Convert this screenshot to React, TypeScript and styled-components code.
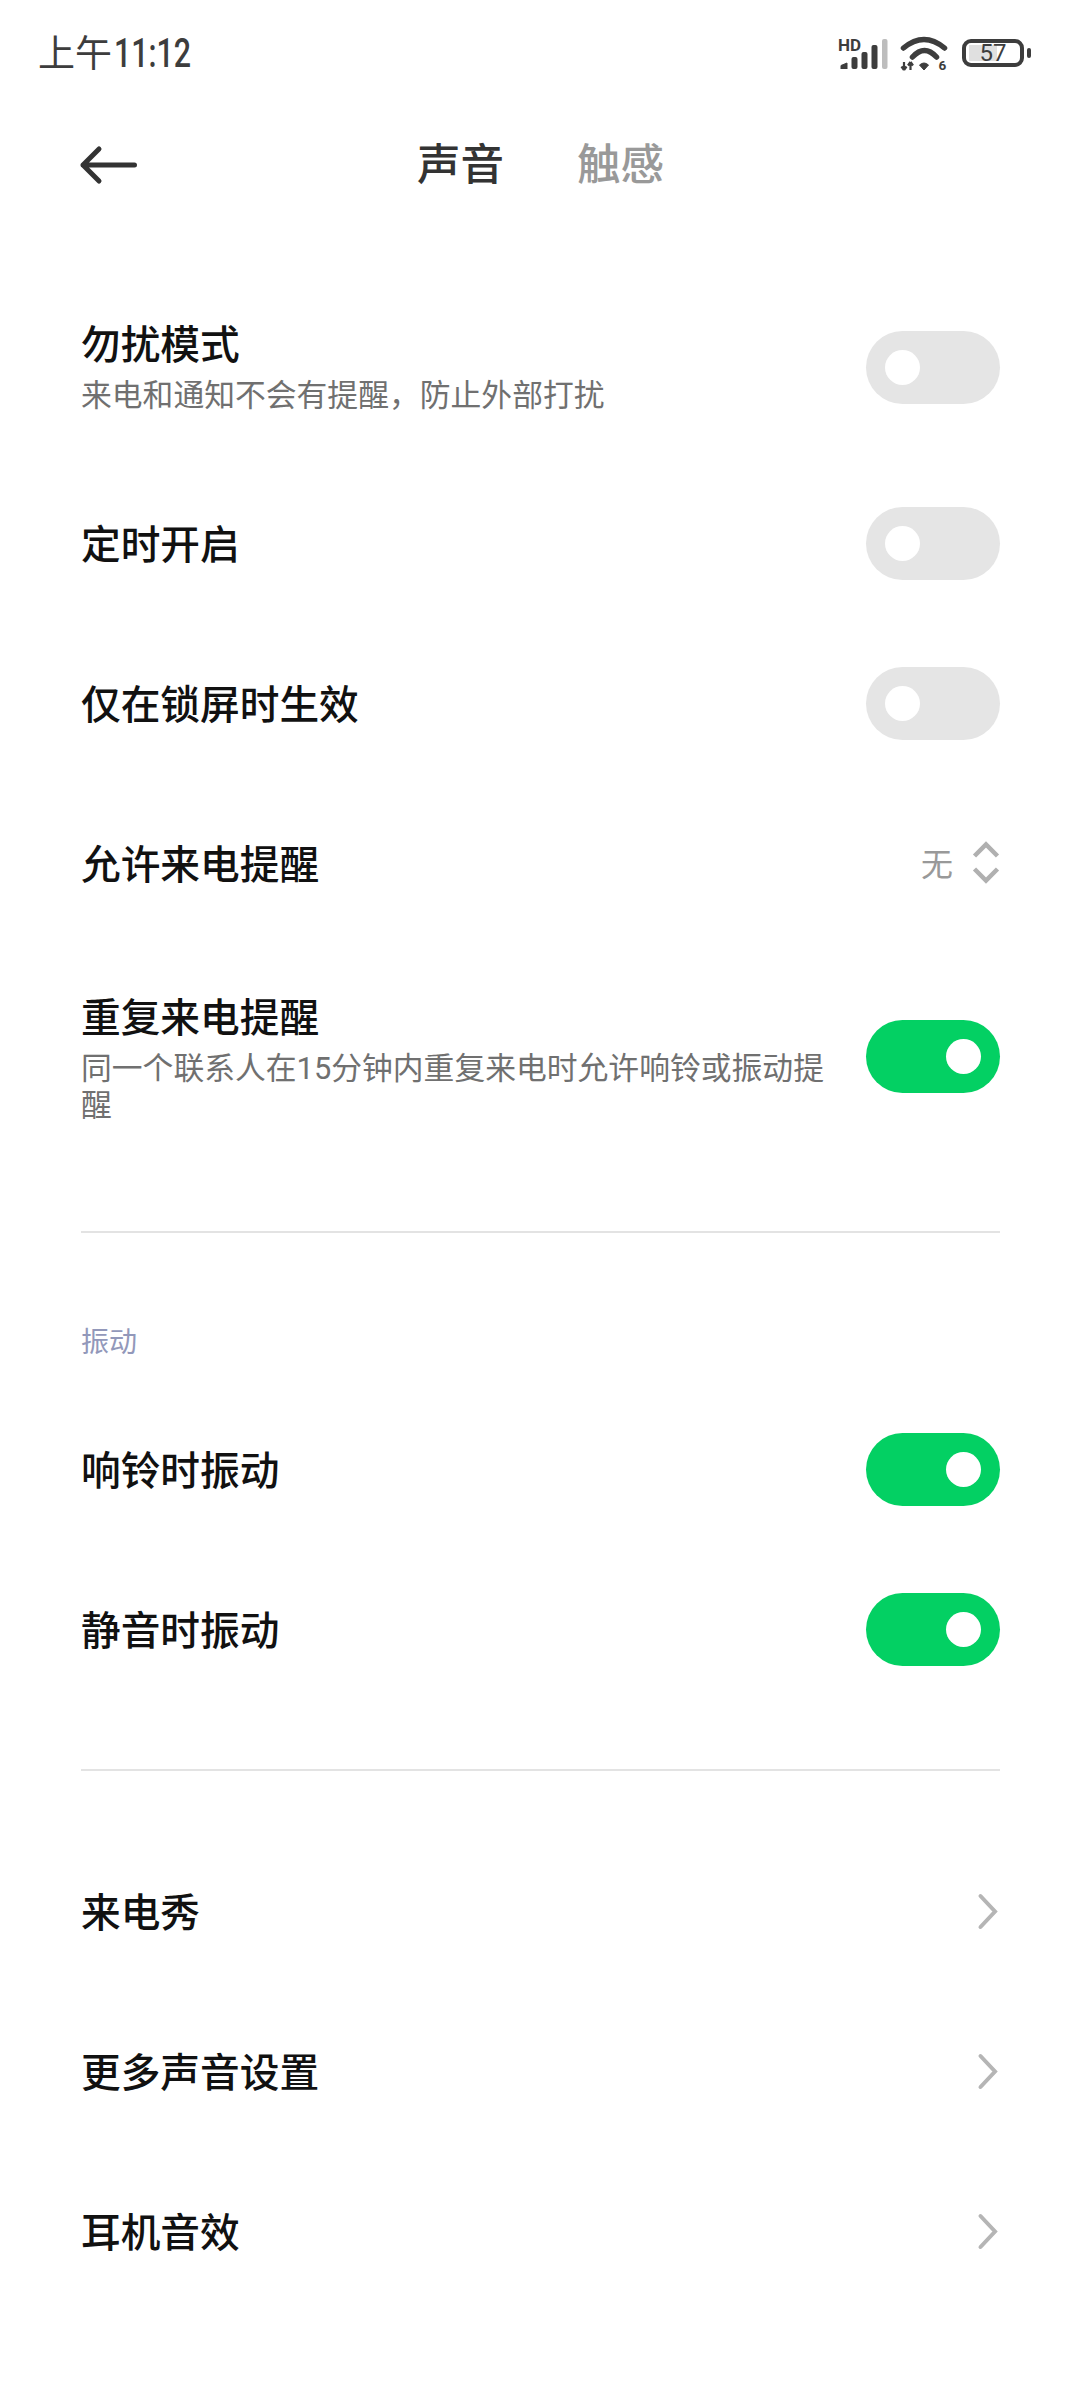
import styled, { createGlobalStyle } from 'styled-components';

const GlobalStyle = createGlobalStyle`
  html, body {
    margin: 0;
    padding: 0;
    background: #ffffff;
  }

  body {
    font-family: Roboto, "Noto Sans CJK SC", sans-serif;
  }
`;

function SignalIcon() {
  return (
    <svg width="49" height="30" viewBox="0 0 49 30" fill="none">
      <path d="M2 30v-3.500L8 24v6z" fill="#3d3d3d" stroke="#3d3d3d" strokeWidth="1" strokeLinejoin="round" />
      <rect x="12.500" y="18" width="6" height="12" rx="2" fill="#3d3d3d" />
      <rect x="22.500" y="13" width="6" height="17" rx="2" fill="#3d3d3d" />
      <rect x="32.500" y="6" width="6" height="24" rx="2" fill="#3d3d3d" />
      <rect x="43" y="0" width="5.500" height="30" rx="2" fill="#bdbdbd" />
    </svg>
  );
}

function WifiIcon() {
  return (
    <svg width="50" height="40" viewBox="0 -2 50 40" fill="none">
      <path d="M3.500 12Q24 -5 44.500 12" stroke="#3d3d3d" strokeWidth="5.500" strokeLinecap="round" />
      <path d="M12.500 21Q24.500 8 36.500 21" stroke="#3d3d3d" strokeWidth="5.500" strokeLinecap="round" />
      <path d="M19.500 29Q24 25 28.500 29L24 34z" fill="#3d3d3d" stroke="#3d3d3d" strokeWidth="1" strokeLinejoin="round" />
      <path d="M4 26v8M4 34l-2.500-3.500M4 34l2.500-3.500M10.500 34v-8M10.500 26l-2.500 3.500M10.500 26l2.500 3.500" stroke="#3d3d3d" strokeWidth="2.200" />
      <text x="38.500" y="34" fontSize="13.500" fontWeight="700" fill="#3d3d3d" fontFamily="Roboto">6</text>
    </svg>
  );
}

function Chevron() {
  return (
    <svg width="24" height="40" viewBox="0 0 24 40" fill="none">
      <path d="M4.500 5L19 20.500L4.500 36" stroke="#b5b5b5" strokeWidth="4" strokeLinecap="round" strokeLinejoin="miter" />
    </svg>
  );
}

function UpDown() {
  return (
    <svg width="28" height="44" viewBox="0 0 28 44" fill="none">
      <path d="M2.500 15L14 3.500L25.500 15M2.500 28L14 39.500L25.500 28" stroke="#b0b0b0" strokeWidth="4.500" />
    </svg>
  );
}

export default function App() {
  return (
    <Page>
      <GlobalStyle />
      <StatusBar>
        <Time>
          上午<Digits>11:12</Digits>
        </Time>
        <StatusIcons>
          <Signal>
            <HdMark>HD</HdMark>
            <SignalIcon />
          </Signal>
          <WifiIcon />
          <BatteryWrap>
            <Battery>57</Battery>
            <BatteryNub />
          </BatteryWrap>
        </StatusIcons>
      </StatusBar>

      <Header>
        <BackButton>
          <svg width="60" height="42" viewBox="0 0 60 42" fill="none">
            <path d="M21 5L5 21L21 37M5 21H56.500" stroke="#333333" strokeWidth="5" strokeLinecap="round" strokeLinejoin="round" />
          </svg>
        </BackButton>
        <Tabs>
          <Tab $active>声音</Tab>
          <Tab>触感</Tab>
        </Tabs>
      </Header>

      <List>
        <Row $height={192}>
          <RowText $lift>
            <RowTitle>勿扰模式</RowTitle>
            <RowSub>来电和通知不会有提醒，防止外部打扰</RowSub>
          </RowText>
          <Toggle />
        </Row>
        <Row>
          <RowTitle>定时开启</RowTitle>
          <Toggle />
        </Row>
        <Row>
          <RowTitle>仅在锁屏时生效</RowTitle>
          <Toggle />
        </Row>
        <Row>
          <RowTitle>允许来电提醒</RowTitle>
          <SelectValue>
            <SelectText>无</SelectText>
            <UpDown />
          </SelectValue>
        </Row>
        <Row $height={226}>
          <RowText>
            <RowTitle>重复来电提醒</RowTitle>
            <RowSub>同一个联系人在15分钟内重复来电时允许响铃或振动提醒</RowSub>
          </RowText>
          <Toggle $on />
        </Row>

        <Divider />
        <SectionLabel>振动</SectionLabel>

        <Row>
          <RowTitle>响铃时振动</RowTitle>
          <Toggle $on />
        </Row>
        <Row>
          <RowTitle>静音时振动</RowTitle>
          <Toggle $on />
        </Row>

        <Divider $bottom />

        <Row>
          <RowTitle>来电秀</RowTitle>
          <Chevron />
        </Row>
        <Row>
          <RowTitle>更多声音设置</RowTitle>
          <Chevron />
        </Row>
        <Row>
          <RowTitle>耳机音效</RowTitle>
          <Chevron />
        </Row>
      </List>
    </Page>
  );
}

const Page = styled.div`
  width: 1080px;
  height: 2400px;
  background: #ffffff;
  overflow: hidden;
`;

const StatusBar = styled.div`
  height: 108px;
  padding: 0 49px 0 38px;
  display: flex;
  align-items: center;
  justify-content: space-between;
`;

const Time = styled.div`
  font-size: 37px;
  color: #3d3d3d;
  margin-bottom: 6px;
`;

// the clock digits are a narrow DIN-like face on the phone
const Digits = styled.span`
  display: inline-block;
  margin-left: 2px;
  font-size: 40px;
  font-weight: 500;
  transform: scaleX(0.76);
  transform-origin: left center;
`;

const StatusIcons = styled.div`
  display: flex;
  align-items: center;
  gap: 12px;
`;

const Signal = styled.div`
  position: relative;
  width: 49px;
  height: 30px;
`;

const HdMark = styled.span`
  position: absolute;
  left: -1px;
  top: -2px;
  font-size: 17px;
  font-weight: 700;
  line-height: 17px;
  color: #3d3d3d;
`;

const BatteryWrap = styled.div`
  display: flex;
  align-items: center;
  gap: 3px;
  margin-bottom: 2px;
`;

const Battery = styled.div`
  box-sizing: border-box;
  width: 62px;
  height: 28px;
  border: 4px solid #3d3d3d;
  border-radius: 9px;
  background: linear-gradient(#e0e0e0, #e0e0e0) 3px 2px / 28px 16px no-repeat;
  font-size: 24px;
  line-height: 20px;
  color: #3d3d3d;
  text-align: center;
`;

const BatteryNub = styled.div`
  width: 4px;
  height: 10px;
  border-radius: 2px;
  background: #3d3d3d;
`;

const Header = styled.div`
  height: 114px;
  display: flex;
  align-items: center;
  padding-left: 78px;
`;

const BackButton = styled.div`
  width: 60px;
  height: 42px;
  margin-right: 279px;
`;

const Tabs = styled.div`
  display: flex;
  gap: 73px;
  padding-bottom: 7px;
`;

const Tab = styled.div<{ $active?: boolean }>`
  font-size: 43.500px;
  font-weight: 500;
  color: ${(p) => (p.$active ? '#333333' : '#999999')};
`;

const List = styled.div`
  margin-top: 49px;
  padding: 0 80px 0 81px;
`;

const Row = styled.div<{ $height?: number }>`
  height: ${(p) => p.$height ?? 160}px;
  display: flex;
  align-items: center;
  justify-content: space-between;
  gap: 40px;
`;

const RowText = styled.div<{ $lift?: boolean }>`
  flex: 1;
  min-width: 0;
  margin-bottom: ${(p) => (p.$lift ? 6 : 0)}px;
`;

const RowTitle = styled.div`
  font-size: 39.700px;
  font-weight: 500;
  line-height: 62px;
  color: #111111;

  ${Row} > & {
    padding-top: 5px;
  }
`;

const RowSub = styled.div`
  font-size: 30.800px;
  line-height: 37px;
  color: #707070;
`;

const Toggle = styled.div<{ $on?: boolean }>`
  box-sizing: border-box;
  flex: none;
  width: 134px;
  height: 73px;
  padding: 0 19px;
  border-radius: 37px;
  background: ${(p) => (p.$on ? '#03d063' : '#e5e5e5')};
  display: flex;
  align-items: center;
  justify-content: ${(p) => (p.$on ? 'flex-end' : 'flex-start')};

  &::after {
    content: '';
    width: 35px;
    height: 35px;
    border-radius: 50%;
    background: #ffffff;
  }
`;

const SelectValue = styled.div`
  display: flex;
  align-items: center;
  gap: 19px;
  font-size: 32px;
  color: #999999;
`;

const SelectText = styled.span`
  margin-bottom: 2px;
`;

const Divider = styled.div<{ $bottom?: boolean }>`
  height: 2px;
  background: #e3e3e3;
  margin: ${(p) => (p.$bottom ? '60px 0 60px' : '62px 0 0')};
`;

const SectionLabel = styled.div`
  margin: 90px 0 26px;
  font-size: 28px;
  line-height: 40px;
  color: #9298ba;
`;
